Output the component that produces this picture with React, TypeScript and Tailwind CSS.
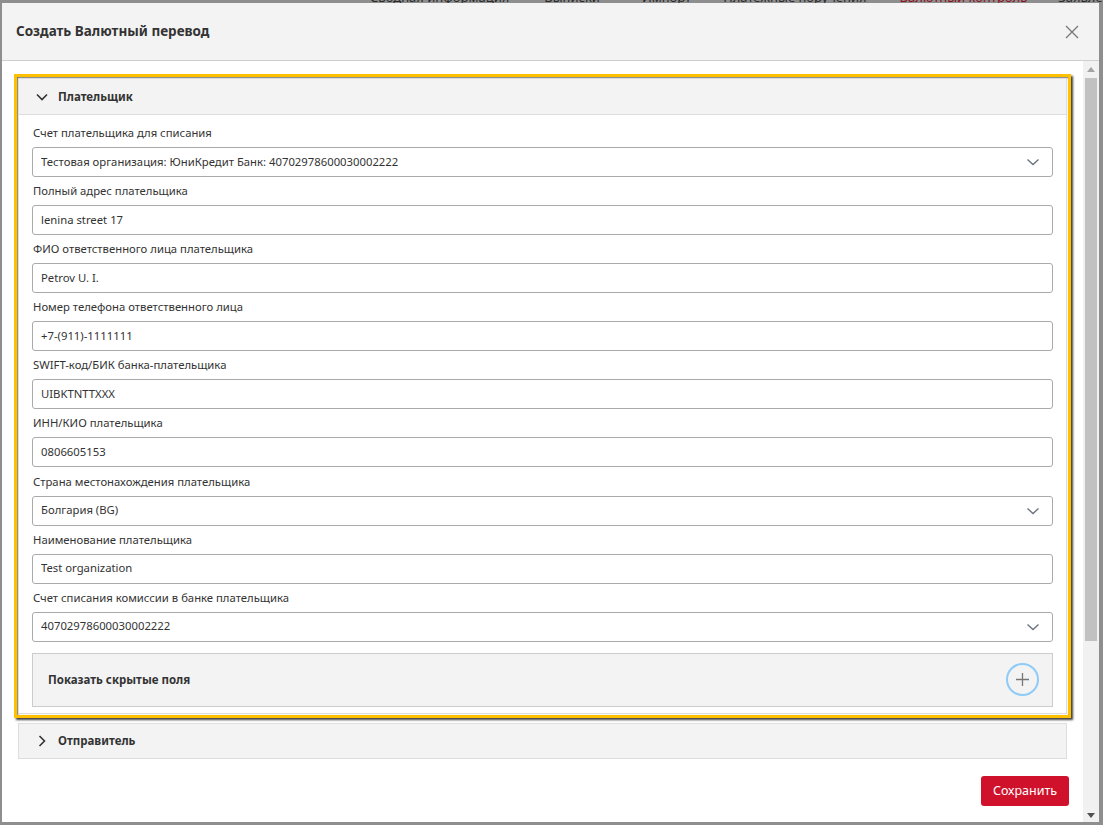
import React from 'react';

const FONT = { fontFamily: '"Noto Sans", "Open Sans", Arial, sans-serif' };

type Field = { label: string; value: string; select?: boolean };

const fields: Field[] = [
  { label: 'Счет плательщика для списания', value: 'Тестовая организация: ЮниКредит Банк: 40702978600030002222', select: true },
  { label: 'Полный адрес плательщика', value: 'lenina street 17' },
  { label: 'ФИО ответственного лица плательщика', value: 'Petrov U. I.' },
  { label: 'Номер телефона ответственного лица', value: '+7-(911)-1111111' },
  { label: 'SWIFT-код/БИК банка-плательщика', value: 'UIBKTNTTXXX' },
  { label: 'ИНН/КИО плательщика', value: '0806605153' },
  { label: 'Страна местонахождения плательщика', value: 'Болгария (BG)', select: true },
  { label: 'Наименование плательщика', value: 'Test organization' },
  { label: 'Счет списания комиссии в банке плательщика', value: '40702978600030002222', select: true },
];

function Chevron({ dir }: { dir: 'down' | 'right' }) {
  return (
    <svg width="14" height="14" viewBox="0 0 14 14" className="shrink-0">
      {dir === 'down' ? (
        <polyline points="2,4.5 7,9.5 12,4.5" fill="none" stroke="#333" strokeWidth="1.6" />
      ) : (
        <polyline points="4.5,2 9.5,7 4.5,12" fill="none" stroke="#333" strokeWidth="1.6" />
      )}
    </svg>
  );
}

function FormRow({ field }: { field: Field }) {
  return (
    <div className="flex flex-col">
      <div className="h-[18px] leading-[18px] text-[11.3px] text-[#333] pl-px">{field.label}</div>
      <div className="mt-[5px] h-[30px] border border-[#aaa] rounded-[3px] bg-white flex items-center pl-2 pr-3">
        <span className="flex-1 text-[11.3px] text-[#333] truncate">{field.value}</span>
        {field.select && (
          <svg width="14" height="10" viewBox="0 0 14 10">
            <polyline points="1.5,2.5 7,7.5 12.5,2.5" fill="none" stroke="#6b7480" strokeWidth="1.4" />
          </svg>
        )}
      </div>
    </div>
  );
}

function Scrollbar() {
  return (
    <div className="w-4 shrink-0 bg-[#f1f1f1] flex flex-col items-center pt-[6px] pb-[4px]">
      <svg width="8" height="5" viewBox="0 0 8 5">
        <polygon points="0,5 8,5 4,0" fill="#a3a3a3" />
      </svg>
      <div className="mt-[6px] w-[12px] h-[563px] bg-[#c1c1c1]" />
      <div className="flex-1" />
      <svg width="8" height="5" viewBox="0 0 8 5">
        <polygon points="0,0 8,0 4,5" fill="#505050" />
      </svg>
    </div>
  );
}

export default function App() {
  return (
    <div className="w-[1103px] h-[825px] bg-[#8e8e8e] flex flex-col overflow-hidden" style={FONT}>
      {/* page behind the overlay, only its bottom edge shows */}
      <div className="h-[3px] overflow-hidden" aria-hidden>
        <div className="flex text-[13px] leading-[13px] -mt-[9px] text-[#2a2a2a] whitespace-nowrap">
          <span className="ml-[370px]">Сводная информация</span>
          <span className="ml-[35px]">Выписки</span>
          <span className="ml-[42px]">Импорт</span>
          <span className="ml-[32px]">Платежные поручения</span>
          <span className="ml-[33px] text-[#8b1020]">Валютный контроль</span>
          <span className="ml-[31px]">Заявления</span>
        </div>
      </div>

      <div className="ml-[2px] w-[1097px] h-[819px] bg-white flex flex-col">
        {/* header */}
        <div className="h-[58px] shrink-0 bg-[#f3f3f3] border-b border-[#cfcfcf] flex items-center pl-[14px] pr-[20px]">
          <h1 className="flex-1 text-[13.5px] font-bold text-[#333]">Создать Валютный перевод</h1>
          <svg width="14" height="14" viewBox="0 0 14 14">
            <path d="M1 1 L13 13 M13 1 L1 13" stroke="#777" strokeWidth="1.3" />
          </svg>
        </div>

        <div className="flex-1 flex min-h-0">
          <div className="flex-1 flex flex-col px-4 pt-[13px]">
            {/* payer section, highlighted */}
            <div className="-mx-1 border-[3px] border-[#ffc000] p-px shadow-[2px_2px_2px_rgba(0,0,0,0.75),inset_1px_1px_2px_rgba(0,0,0,0.6)]">
              <div className="border border-[#ddd] bg-white">
                <div className="h-[36px] bg-[#f3f3f3] border-b border-[#ddd] flex items-center pl-[16px] gap-[9px]">
                  <Chevron dir="down" />
                  <span className="text-[11.5px] font-bold text-[#333]">Плательщик</span>
                </div>
                <div className="px-[13px] pt-[9px] pb-[6px] flex flex-col gap-[5.1px]">
                  {fields.map((f) => (
                    <FormRow key={f.label} field={f} />
                  ))}
                  <div className="mt-[6px] h-[54px] bg-[#f3f3f3] border border-[#ccc] flex items-center pl-[15px] pr-[13px]">
                    <span className="flex-1 text-[11.5px] font-bold text-[#333]">Показать скрытые поля</span>
                    <div className="w-[33px] h-[33px] rounded-full border-2 border-[#8ecbf7] flex items-center justify-center">
                      <svg width="15" height="15" viewBox="0 0 15 15">
                        <path d="M7.5 1 V14 M1 7.5 H14" stroke="#777" strokeWidth="1.3" />
                      </svg>
                    </div>
                  </div>
                </div>
              </div>
            </div>

            {/* sender section, collapsed */}
            <div className="mt-[5px] h-[36px] bg-[#f3f3f3] border border-[#ddd] flex items-center pl-[16px] gap-[9px]">
              <Chevron dir="right" />
              <span className="text-[11.5px] font-bold text-[#333]">Отправитель</span>
            </div>

            <div className="flex-1" />
            <div className="flex justify-end pb-[16px] -mr-[2px]">
              <button className="h-[30px] w-[88px] rounded-[3px] bg-[#d0112b] text-white text-[12.5px]">Сохранить</button>
            </div>
          </div>
          <Scrollbar />
        </div>
      </div>
    </div>
  );
}
